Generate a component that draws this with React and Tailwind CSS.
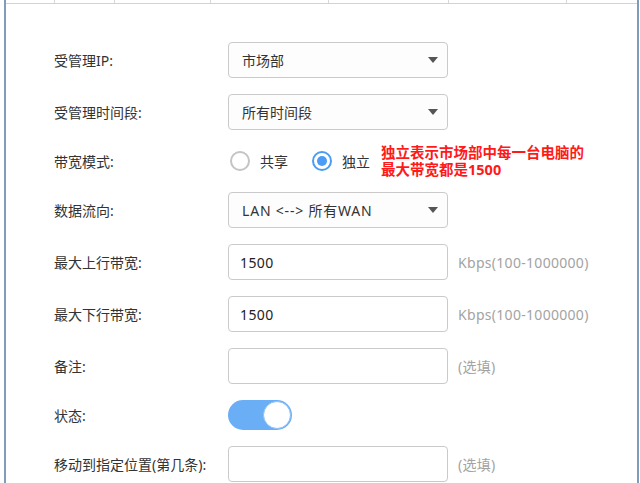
const font = { fontFamily: '"Noto Sans", "Noto Sans CJK SC", sans-serif' }

function Label({ children }) {
  return <div className="w-[174px] shrink-0 text-[14px] text-[#333]">{children}</div>
}

function Select({ value, wide }) {
  return (
    <div className="flex h-[36px] w-[220px] items-center justify-between rounded-[4px] border border-[#cacaca] bg-[#fdfdfd] pl-[13px] pr-[9px] text-[14px] text-[#333]">
      <span className={wide ? 'tracking-[0.8px]' : ''}>{value}</span>
      <span className="h-0 w-0 border-x-[5px] border-t-[6px] border-x-transparent border-t-[#555]" />
    </div>
  )
}

function TextBox({ value, hint }) {
  return (
    <div className="flex items-center">
      <div className="flex h-[36px] w-[220px] items-center rounded-[4px] border border-[#cacaca] bg-white pl-[11px] text-[14px] tracking-[0.4px] text-[#222]">
        {value}
      </div>
      {hint && <span className="ml-[10px] text-[14px] tracking-[0.3px] text-[#a3a3a3]">{hint}</span>}
    </div>
  )
}

function Row({ label, children, className = 'h-[36px]' }) {
  return (
    <div className={`flex items-center ${className}`}>
      <Label>{label}</Label>
      {children}
    </div>
  )
}

const ticks = [48, 59, 95, 117, 119, 117]

export default function App() {
  return (
    <div className="h-[483px] w-[640px] overflow-hidden bg-white" style={font}>
      <div className="ml-[4px] mr-[1px] h-full border-x-2 border-[#7f9dbb]">
        <div className="box-content flex h-[3px] border-b border-[#d2d2d2]">
          {ticks.map((w, i) => (
            <div key={i} className="flex">
              <div style={{ width: w }} />
              <div className="h-[3px] w-px bg-[#d8d8d8]" />
            </div>
          ))}
        </div>

        <div className="flex flex-col gap-4 pl-[48px] pt-[38px]">
          <Row label="受管理IP:">
            <Select value="市场部" />
          </Row>
          <Row label="受管理时间段:">
            <Select value="所有时间段" />
          </Row>
          <Row label="带宽模式:" className="h-[30px]">
            <div className="flex items-center">
              <span className="ml-[2px] h-[20px] w-[20px] rounded-full border-2 border-[#c4c4c4] bg-white" />
              <span className="ml-[10px] text-[14px] text-[#333]">共享</span>
              <span className="ml-[24px] flex h-[20px] w-[20px] items-center justify-center rounded-full border-2 border-[#4a9cf6] bg-white">
                <span className="h-[10px] w-[10px] rounded-full bg-[#4a9cf6]" />
              </span>
              <span className="ml-[10px] text-[14px] text-[#333]">独立</span>
              <p className="ml-[11px] text-[14.5px] font-bold leading-[17px] text-[#ff1a1a]">
                独立表示市场部中每一台电脑的
                <br />
                最大带宽都是1500
              </p>
            </div>
          </Row>
          <Row label="数据流向:">
            <Select value="LAN <--> 所有WAN" wide />
          </Row>
          <Row label="最大上行带宽:">
            <TextBox value="1500" hint="Kbps(100-1000000)" />
          </Row>
          <Row label="最大下行带宽:">
            <TextBox value="1500" hint="Kbps(100-1000000)" />
          </Row>
          <Row label="备注:">
            <TextBox value="" hint="(选填)" />
          </Row>
          <Row label="状态:" className="h-[30px]">
            <div className="flex h-[30px] w-[64px] items-center justify-end rounded-full bg-[#6aaef5] pr-[1px]">
              <span className="h-[28px] w-[28px] rounded-full border border-[#8cc0f7] bg-white" />
            </div>
          </Row>
          <Row label="移动到指定位置(第几条):">
            <TextBox value="" hint="(选填)" />
          </Row>
        </div>
      </div>
    </div>
  )
}
